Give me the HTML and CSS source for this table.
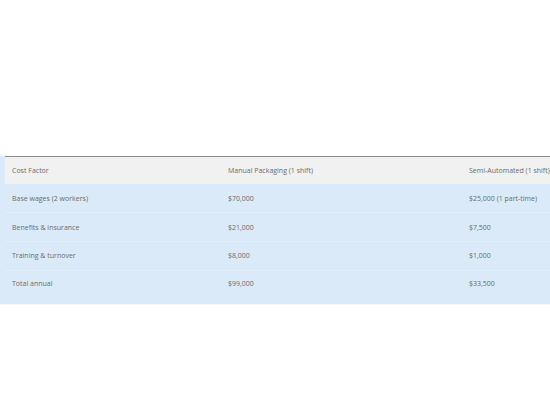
FILE: index.html
```html
<!DOCTYPE html>
<html>
<head>
<meta charset="utf-8">
<link rel="stylesheet" href="styles.css">
</head>
<body>
<div class="page">
  <div class="table-wrap">
    <table class="cost-table">
      <thead>
        <tr>
          <th class="c1">Cost Factor</th>
          <th class="c2">Manual Packaging (1 shift)</th>
          <th class="c3">Semi-Automated (1 shift)</th>
        </tr>
      </thead>
      <tbody>
        <tr><td>Base wages (2 workers)</td><td>$70,000</td><td>$25,000 (1 part-time)</td></tr>
        <tr><td>Benefits &amp; insurance</td><td>$21,000</td><td>$7,500</td></tr>
        <tr><td>Training &amp; turnover</td><td>$8,000</td><td>$1,000</td></tr>
        <tr class="last"><td>Total annual</td><td>$99,000</td><td>$33,500</td></tr>
      </tbody>
    </table>
  </div>
</div>
</body>
</html>
```
FILE: styles.css
```css
html, body {
  margin: 0;
  padding: 0;
  background: #ffffff;
  overflow: hidden;
}
.page {
  width: 550px;
  height: 412px;
  padding-top: 156px;
  box-sizing: border-box;
  overflow: hidden;
  font-family: "Open Sans", "Liberation Sans", sans-serif;
}
.table-wrap {
  background: #daeaf8;
  width: 700px;
  padding-left: 5px;
  border-bottom: 1px solid #f4f7fb;
}
.cost-table {
  border-collapse: collapse;
  table-layout: fixed;
  width: 420px;
  font-size: 7px;
  color: #6c6c6c;
}
.cost-table th {
  background: #f1f1f1;
  font-weight: normal;
  text-align: left;
  border-top: 1px solid #8e8e8e;
  height: 27px;
  padding: 0 0 0 7px;
}
.cost-table .c1 { width: 209px; }
.cost-table .c2 { width: 234px; }
.cost-table .c3 { width: 160px; }
.cost-table td {
  height: 28.7px;
  box-sizing: border-box;
  padding: 0 0 0 7px;
  border-bottom: 1px solid #e2eefa;
  white-space: nowrap;
}
.cost-table tr.last td {
  height: 34px;
  padding-bottom: 8px;
  border-bottom: none;
}
```
